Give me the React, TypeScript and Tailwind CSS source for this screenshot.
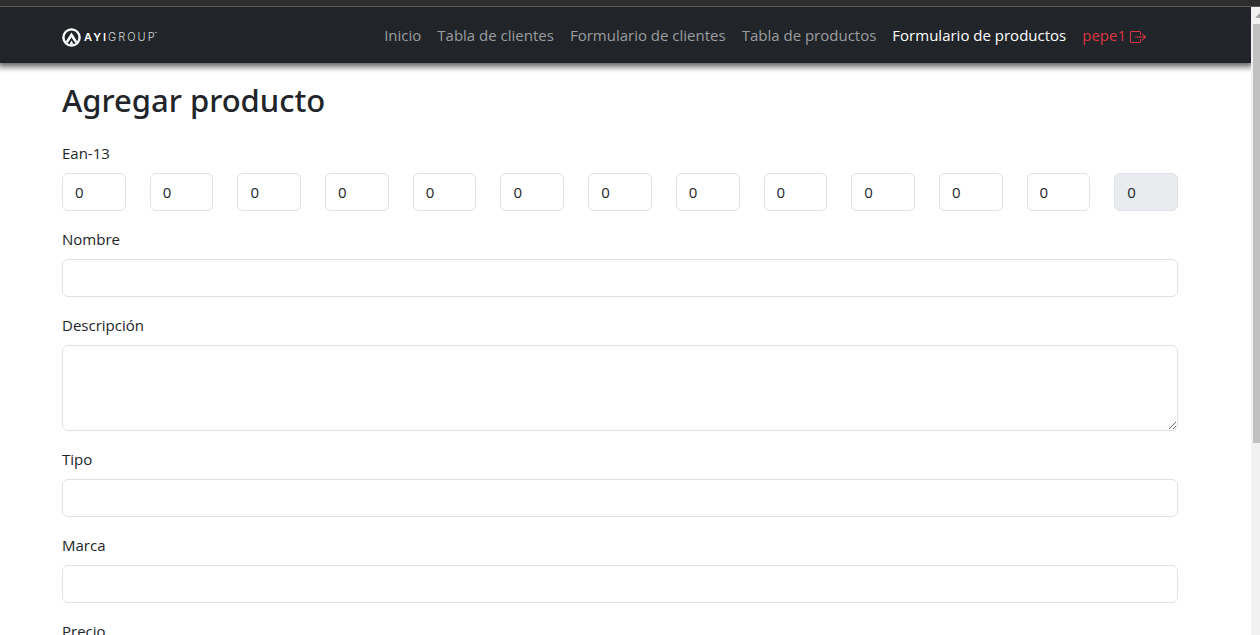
import { useState } from "react";
import type { ReactNode } from "react";

const links = [
  { label: "Inicio", active: false },
  { label: "Tabla de clientes", active: false },
  { label: "Formulario de clientes", active: false },
  { label: "Tabla de productos", active: false },
  { label: "Formulario de productos", active: true },
];

const controlClass =
  "block w-full rounded-md border border-[#dee2e6] bg-white px-3 text-[15px] leading-6 text-[#212529] outline-none focus:border-[#86b7fe]";

function Logo() {
  return (
    <a href="#inicio" aria-label="AYI Group" className="flex items-center gap-[3px] text-white">
      <svg viewBox="0 0 19 19" className="size-[19px]" fill="none" aria-hidden="true">
        <circle cx="9.5" cy="9.5" r="8.1" stroke="currentColor" strokeWidth="2.4" />
        <path d="M4.7 14.4 9.5 7l4.8 7.4" stroke="currentColor" strokeWidth="2.6" />
        <path d="m7.4 16.6 2.1-4 2.1 4z" fill="currentColor" />
      </svg>
      <span className="flex font-['Inter',sans-serif] text-[11px] leading-4 tracking-[2px]">
        <span className="font-semibold">AYI</span>
        <span className="font-light text-[#d5d6d7]">GROUP</span>
        <span className="-ml-0.5 text-[4px] leading-[10px] tracking-normal">™</span>
      </span>
    </a>
  );
}

function Navbar() {
  return (
    <header className="relative z-10 bg-[#212529] pr-[11px] shadow-[0_2px_6px_2px_rgba(0,0,0,0.6)]">
      <nav className="mx-auto flex h-14 max-w-[1140px] items-center justify-between pt-1 pr-11 pb-0 pl-3">
        <Logo />
        <ul className="flex items-center gap-4 pb-1 text-[15px] leading-6">
          {links.map((link) => (
            <li key={link.label}>
              <a
                href="#"
                aria-current={link.active ? "page" : undefined}
                className={link.active ? "text-white" : "text-[#9b9d9f] hover:text-white"}
              >
                {link.label}
              </a>
            </li>
          ))}
          <li>
            <button type="button" className="flex items-center gap-1 text-[#dc3545]">
              pepe1
              <svg viewBox="0 0 16 16" className="mt-1 size-4" fill="currentColor" role="img" aria-label="Salir">
                <path
                  fillRule="evenodd"
                  d="M10 12.5a.5.5 0 0 1-.5.5h-8a.5.5 0 0 1-.5-.5v-9a.5.5 0 0 1 .5-.5h8a.5.5 0 0 1 .5.5v2a.5.5 0 0 0 1 0v-2A1.5 1.5 0 0 0 9.5 2h-8A1.5 1.5 0 0 0 0 3.5v9A1.5 1.5 0 0 0 1.5 14h8a1.5 1.5 0 0 0 1.5-1.5v-2a.5.5 0 0 0-1 0v2z"
                />
                <path
                  fillRule="evenodd"
                  d="M15.854 8.354a.5.5 0 0 0 0-.708l-3-3a.5.5 0 0 0-.708.708L14.293 7.5H5.5a.5.5 0 0 0 0 1h8.793l-2.147 2.146a.5.5 0 0 0 .708.708l3-3z"
                />
              </svg>
            </button>
          </li>
        </ul>
      </nav>
    </header>
  );
}

function Field({ id, label, children }: { id: string; label: string; children: ReactNode }) {
  return (
    <div className="mb-4">
      <label htmlFor={id} className="mb-2 block text-[15px] leading-6">
        {label}
      </label>
      {children}
    </div>
  );
}

function TextField({ id, label }: { id: string; label: string }) {
  return (
    <Field id={id} label={label}>
      <input id={id} name={id} type="text" className={`${controlClass} h-[38px]`} />
    </Field>
  );
}

function EanField() {
  const [digits, setDigits] = useState<string[]>(Array(12).fill("0"));
  const sum = digits.reduce((total, digit, i) => total + Number(digit) * (i % 2 ? 3 : 1), 0);
  const check = (10 - (sum % 10)) % 10;

  return (
    <Field id="ean-1" label="Ean-13">
      <div className="grid grid-cols-13 gap-6">
        {digits.map((digit, i) => (
          <input
            key={i}
            id={`ean-${i + 1}`}
            aria-label={i === 0 ? undefined : `Ean-13, ${i + 1}`}
            inputMode="numeric"
            maxLength={1}
            value={digit}
            onChange={(e) => {
              const value = e.target.value.replace(/\D/g, "");
              setDigits(digits.map((d, j) => (j === i ? value : d)));
            }}
            className={`${controlClass} h-[38px]`}
          />
        ))}
        <input
          id="ean-13"
          aria-label="Ean-13, 13"
          disabled
          value={check}
          className="block h-[38px] w-full rounded-md border border-[#dee2e6] bg-[#e9ecef] px-3 text-[15px] leading-6 text-[#212529]"
        />
      </div>
    </Field>
  );
}

function Scrollbar() {
  return (
    <div aria-hidden="true" className="flex w-[9px] shrink-0 flex-col overflow-hidden bg-[#f1f1f1] pl-0.5">
      <svg viewBox="0 0 7 17" className="h-[17px] w-[7px] shrink-0" fill="#a3a3a3">
        <path d="M2 11 7 6v5z" />
      </svg>
      <div className="h-2/3 bg-[#c1c1c1]" />
    </div>
  );
}

export default function App() {
  return (
    <div className="flex h-screen flex-col bg-white font-['Open_Sans','Noto_Sans',sans-serif] text-[#212529]">
      <div className="h-[7px] shrink-0 border-b border-[#5a5a5c] bg-[#2d2d2d]" />
      <div className="flex min-h-0 grow">
        <div className="min-w-0 grow overflow-hidden">
          <Navbar />
          <div className="pr-[11px]">
            <main className="mx-auto max-w-[1140px] px-3 pt-4">
              <h1 className="mb-5 font-['Noto_Sans',sans-serif] text-[31px] leading-[42px] font-medium">
                Agregar producto
              </h1>
              <form>
                <EanField />
                <TextField id="nombre" label="Nombre" />
                <Field id="descripcion" label="Descripción">
                  <textarea
                    id="descripcion"
                    name="descripcion"
                    rows={3}
                    className={`${controlClass} min-h-[86px] resize-y py-1.5`}
                  />
                </Field>
                <TextField id="tipo" label="Tipo" />
                <TextField id="marca" label="Marca" />
                <TextField id="precio" label="Precio" />
              </form>
            </main>
          </div>
        </div>
        <Scrollbar />
      </div>
    </div>
  );
}
